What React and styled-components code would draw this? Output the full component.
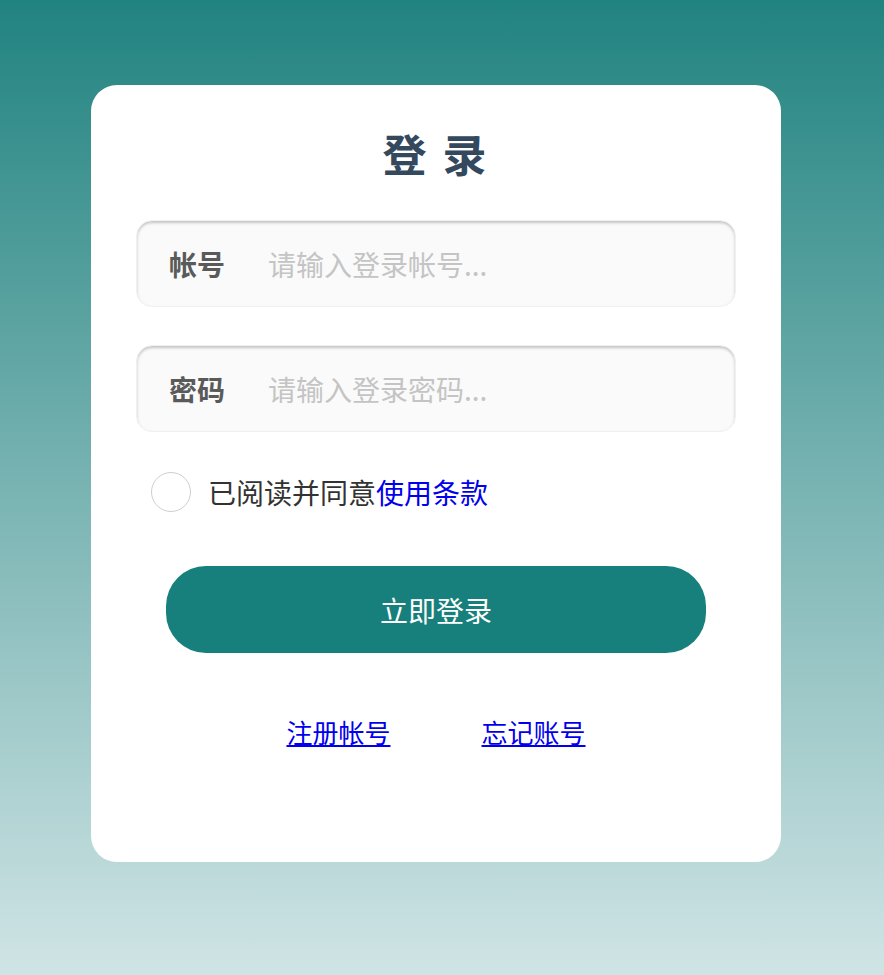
import styled, { createGlobalStyle } from "styled-components";
import { useState } from "react";

const GlobalStyle = createGlobalStyle`
  html, body {
    margin: 0;
    padding: 0;
  }
  body {
    font-family: "Noto Sans CJK SC", "Noto Sans", sans-serif;
  }
  * {
    box-sizing: border-box;
  }
`;

const Page = styled.div`
  min-height: 975px;
  background: linear-gradient(180deg, #218380 0%, #d0e4e5 100%);
  padding-top: 85px;
  display: flex;
  justify-content: center;
`;

const Card = styled.div`
  width: 690px;
  height: 777px;
  margin-right: 12px;
  background: #fff;
  border-radius: 26px;
  padding: 16px 45px 0;
  display: flex;
  flex-direction: column;
`;

const Title = styled.h1`
  margin: 0;
  text-align: center;
  font-size: 44px;
  font-weight: 700;
  line-height: 104px;
  color: #34495e;
  letter-spacing: 3px;
`;

const Field = styled.label`
  display: flex;
  align-items: center;
  height: 87px;
  margin-top: ${(p) => p.$top}px;
  padding-left: 32px;
  background: #fafafa;
  border-radius: 16px;
  border: 1px solid #f0f0f0;
  box-shadow: inset 0 2px 3px rgba(0, 0, 0, 0.22);
`;

const FieldLabel = styled.span`
  width: 56px;
  font-size: 28px;
  font-weight: 700;
  color: #5a5a5a;
`;

const Input = styled.input`
  flex: 1;
  margin-left: 43px;
  border: none;
  outline: none;
  background: transparent;
  font-family: inherit;
  font-size: 28px;
  color: #333;
  padding: 0;

  &::placeholder {
    color: #c4c4c4;
  }
`;

const AgreeRow = styled.div`
  display: flex;
  align-items: center;
  gap: 17px;
  margin-top: 40px;
  padding-left: 15px;
  font-size: 28px;
  color: #333;
`;

const Circle = styled.span`
  width: 40px;
  height: 40px;
  border-radius: 50%;
  border: 1px solid #cfcfcf;
  background: ${(p) => (p.$on ? "#177f7c" : "#fff")};
  cursor: pointer;
`;

const Terms = styled.a`
  color: #0000ee;
  text-decoration: none;
`;

const LoginButton = styled.button`
  align-self: center;
  width: 540px;
  height: 87px;
  margin-top: 54px;
  border: none;
  border-radius: 40px;
  background: #177f7c;
  color: #fff;
  font-family: inherit;
  font-size: 28px;
  cursor: pointer;
`;

const Links = styled.div`
  display: flex;
  justify-content: center;
  gap: 91px;
  margin-top: 60px;
`;

const Link = styled.a`
  font-size: 26px;
  color: #0000ee;
  text-decoration: underline;
`;

const App = () => {
  const [agree, setAgree] = useState(false);

  return (
    <>
      <GlobalStyle />
      <Page>
        <Card>
          <Title>登 录</Title>
          <Field $top={15}>
            <FieldLabel>帐号</FieldLabel>
            <Input placeholder="请输入登录帐号..." />
          </Field>
          <Field $top={38}>
            <FieldLabel>密码</FieldLabel>
            <Input type="password" placeholder="请输入登录密码..." />
          </Field>
          <AgreeRow>
            <Circle $on={agree} onClick={() => setAgree(!agree)} />
            <span>
              已阅读并同意<Terms href="#">使用条款</Terms>
            </span>
          </AgreeRow>
          <LoginButton>立即登录</LoginButton>
          <Links>
            <Link href="#">注册帐号</Link>
            <Link href="#">忘记账号</Link>
          </Links>
        </Card>
      </Page>
    </>
  );
};

export default App;
